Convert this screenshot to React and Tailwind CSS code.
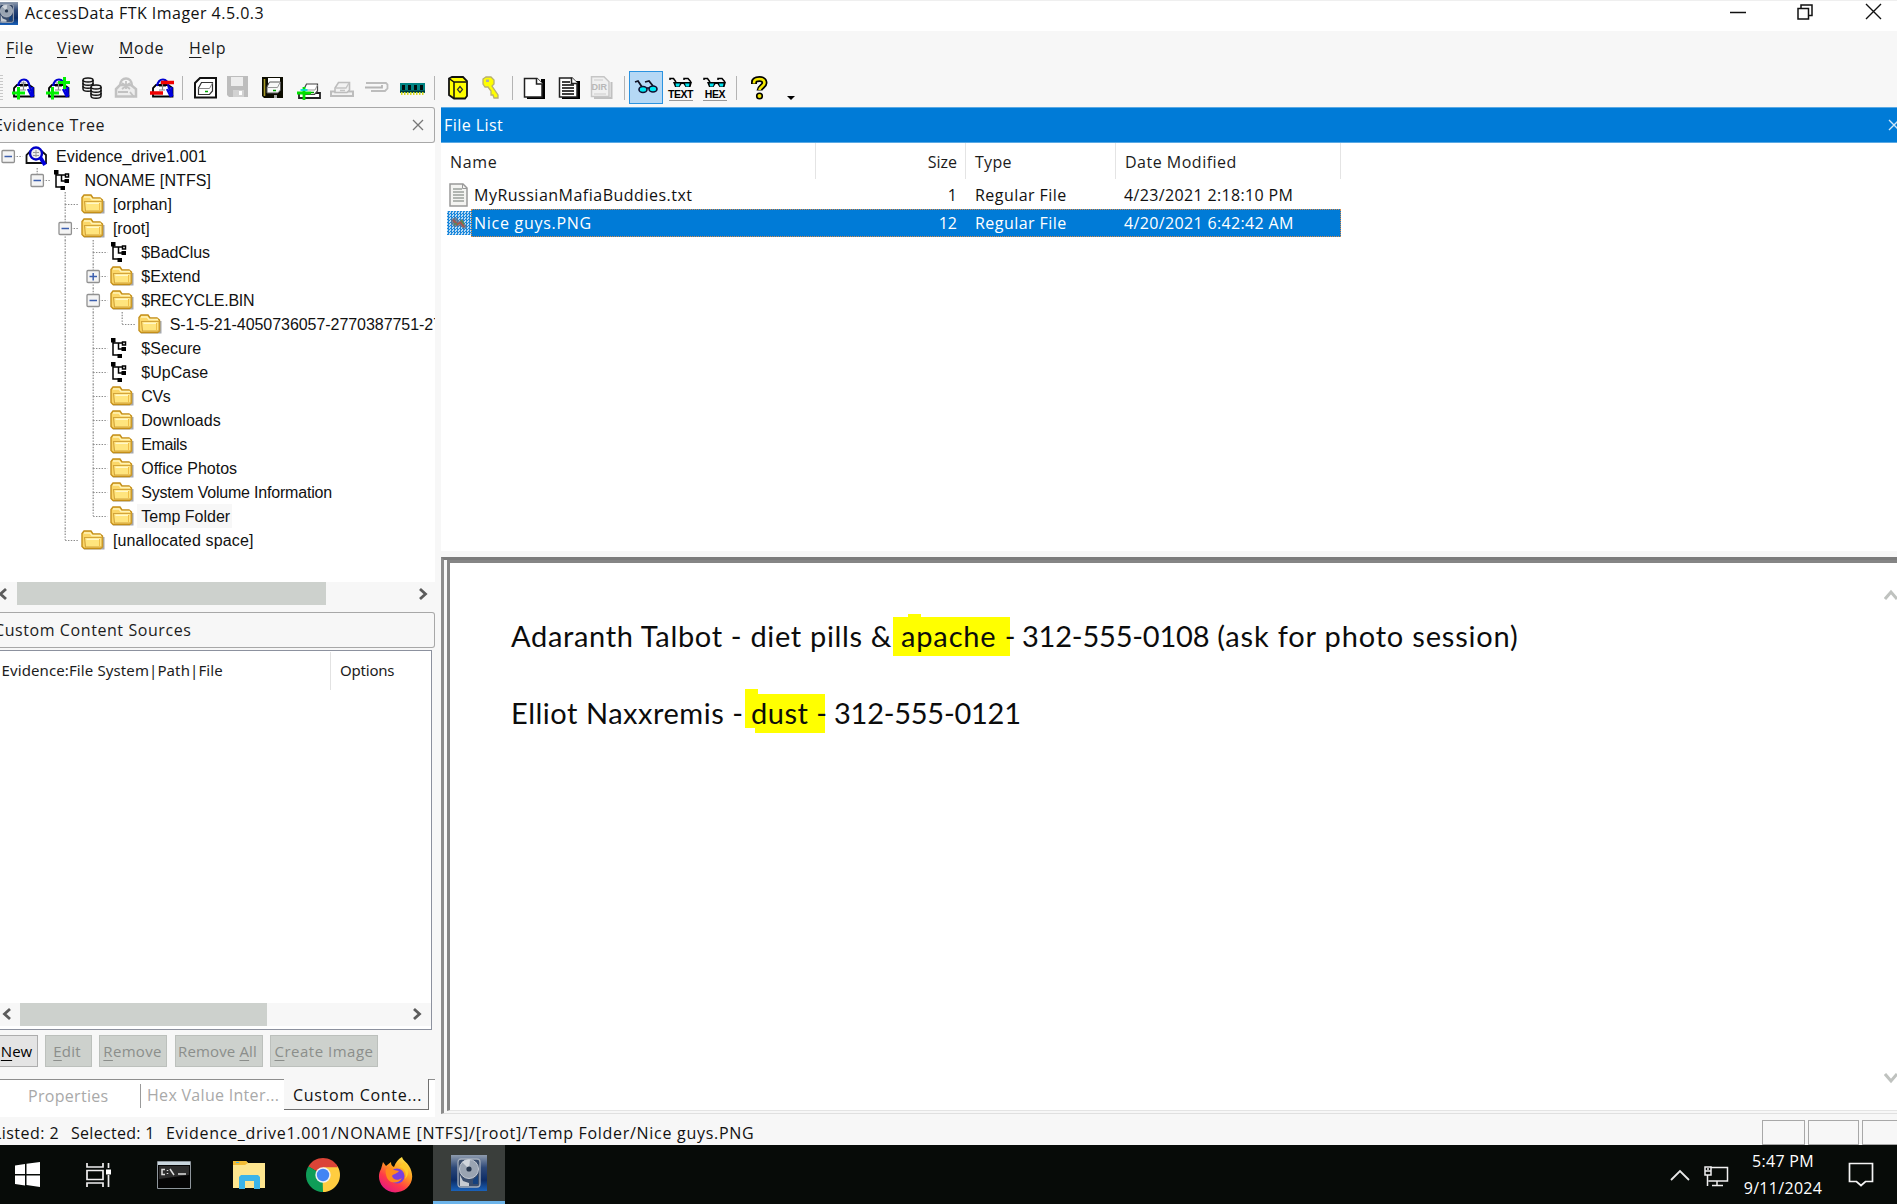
const UI = "font-['Open_Sans','Noto_Sans',sans-serif]";

function Svg({ w = 24, h = 24, children, className = "" }) {
  return (
    <svg width={w} height={h} viewBox={`0 0 ${w} ${h}`} fill="none" className={`block shrink-0 ${className}`}>
      {children}
    </svg>
  );
}

/* ---------- shared glyph pieces ---------- */

function DriveLens() {
  return (
    <>
      <path d="M3 20.500V12l3-3h12l4.500 3v8.500z" fill="#fff" stroke="#000" strokeWidth="1.800" />
      <path d="M7 10C8 5 10 3.500 13 3.500s5 2.500 5.500 7l4 10" stroke="#0000d0" strokeWidth="2.200" />
      <path d="M10 7h5M9 10.500h7M12.500 5.500v8M9 14h6" stroke="#8a8a8a" strokeWidth="1.200" />
      <path d="M17 13l4 8M21.500 11v9" stroke="#0000e0" strokeWidth="2.400" />
    </>
  );
}

function AddEvidence() {
  return (
    <Svg>
      <DriveLens />
      <path d="M1 17h13M7.500 11V23.500" stroke="#00f000" strokeWidth="3" />
    </Svg>
  );
}

function AddAll() {
  return (
    <Svg>
      <DriveLens />
      <path d="M0 17h13M6.500 11V23.500M12 6.500h12M18.500 1v12" stroke="#00f000" strokeWidth="3" />
    </Svg>
  );
}

function Stack({ x, y }) {
  return (
    <g stroke="#111" strokeWidth="1.500" fill="#eee">
      <path d={`M${x} ${y + 2}v9c0 3 10 3 10 0v-9`} />
      <path d={`M${x} ${y + 5}c0 3 10 3 10 0M${x} ${y + 8}c0 3 10 3 10 0`} />
      <ellipse cx={x + 5} cy={y + 2} rx="5" ry="2" />
    </g>
  );
}

function ImageMounting() {
  return (
    <Svg>
      <Stack x={3} y={2} />
      <Stack x={11} y={9} />
    </Svg>
  );
}

function RemoveGray() {
  return (
    <Svg className="-ml-[1px]">
      <path d="M2 20.500V13l4-4h11l5 4v7.500z" stroke="#c2c2c2" strokeWidth="2.500" fill="#ededed" />
      <path d="M6 10C6 5 9 2.500 12 2.500s6 2.500 6 7.500" stroke="#c2c2c2" strokeWidth="2.500" />
      <path d="M8 7l8 6M16 7l-8 6M12 5v8M4 16h10M16 16l4 5" stroke="#c2c2c2" strokeWidth="1.800" />
    </Svg>
  );
}

function RemoveRed() {
  return (
    <Svg className="ml-[2px]">
      <DriveLens />
      <path d="M11 6.500h13M0 17h13" stroke="#f00000" strokeWidth="3.400" />
    </Svg>
  );
}

function DiskImage() {
  return (
    <Svg>
      <path d="M2 21.500V7l5-5h16v19.500z" fill="#fff" stroke="#111" strokeWidth="2" />
      <path d="M5.500 18.500V12l3-5.500h11V15l-3 3.500z" fill="#fff" stroke="#333" strokeWidth="1.200" />
      <path d="M5.500 12.500h11l3-5.500" stroke="#888" strokeWidth="1" />
      <path d="M12 15.500h3" stroke="#00a000" strokeWidth="1.500" />
    </Svg>
  );
}

function FloppyGray() {
  return (
    <Svg className="-ml-[4px]">
      <path d="M2 0h21v21H4l-2-2z" fill="#bdbdbd" />
      <path d="M6 1h12v9H6z" fill="#ededed" />
      <path d="M8 14h11v7H8z" fill="#d2d2d2" />
      <path d="M14 15h3v4h-3z" fill="#fff" />
    </Svg>
  );
}

function FloppyDrive() {
  return (
    <Svg className="-ml-[3px]">
      <path d="M2 1h21v21H4l-2-2z" fill="#0c0c00" />
      <path d="M4.500 3v17" stroke="#a89c28" strokeWidth="1.600" />
      <path d="M8 2h12v5H8z" fill="#fff" />
      <path d="M7 17v-6l2.500-5h11v8l-2.500 3z" fill="#f8f8f8" stroke="#555" />
      <path d="M7.500 11.500h10l2.500-5" stroke="#999" />
      <path d="M13 14.500h3" stroke="#00a000" strokeWidth="1.500" />
      <path d="M14 19h3v3h-3z" fill="#aaa" />
    </Svg>
  );
}

function AddDrive() {
  return (
    <Svg className="ml-[1px]">
      <path d="M2 17h21v5H2z" fill="#fff" stroke="#222" strokeWidth="1.800" />
      <path d="M6.500 18.500V14L9.500 8h11v7l-3 3.500z" fill="#fff" stroke="#444" strokeWidth="1.200" />
      <path d="M9 14h9l2.500-5" stroke="#999" />
      <path d="M14 16.500h3" stroke="#00a000" strokeWidth="1.500" />
      <path d="M0 17h14M7 11v13" stroke="#00e000" strokeWidth="2.800" />
      <path d="M3.500 14h7" stroke="#00d8d8" strokeWidth="1.800" />
    </Svg>
  );
}

function DriveGray() {
  return (
    <Svg className="-ml-[1px]">
      <path d="M1 15.500h22V20H1z" fill="#f2f2f2" stroke="#bdbdbd" strokeWidth="2" />
      <path d="M5 16.500V12l3.500-5.500h11V14L17 16.500z" fill="#f2f2f2" stroke="#bdbdbd" strokeWidth="1.600" />
      <path d="M6 12h10l3-5M10 14.500h5" stroke="#c4c4c4" strokeWidth="1.400" />
    </Svg>
  );
}

function UsbGray() {
  return (
    <Svg>
      <path d="M1 7h20l1.500 1.500v4L20 15H6" stroke="#bdbdbd" strokeWidth="1.800" />
      <path d="M0 11.500h17V9" stroke="#b5b5b5" strokeWidth="1.800" />
    </Svg>
  );
}

function Memory() {
  return (
    <Svg w={25} className="ml-[2px]">
      <path d="M0 7h25v10H0z" fill="#008484" />
      <path d="M2 9h3v5H2zM8 9h3v5H8zM14 9h3v5h-3zM20 9h3v5h-3z" fill="#001010" />
      <path d="M0 15.500h25" stroke="#003838" strokeWidth="2" />
      <path d="M1 17.500h23" stroke="#d8d820" strokeWidth="3" strokeDasharray="1.500 1.500" />
    </Svg>
  );
}

function Safe() {
  return (
    <Svg className="ml-[3px]">
      <path d="M2 2.500L5 1h11l4 4v15l-2 2.500H7L2 19z" fill="#ff0" stroke="#111" strokeWidth="1.800" />
      <path d="M2 2.500L7 6h12M7 6v16" stroke="#111" strokeWidth="1.500" />
      <path d="M13 10.500l2.500 3-2.500 3-2.500-3z" stroke="#333" strokeWidth="1.200" />
    </Svg>
  );
}

function Key() {
  return (
    <Svg className="-ml-[1px]">
      <path d="M4 3l3-2h5l3 3v4l-2 2 6 9v3h-4l-1-3h-2v-4l-3-4H6L4 8z" fill="#ff0" stroke="#b8b070" strokeWidth="1.300" />
      <path d="M7 3.500h3V6H7z" fill="#aaa" />
    </Svg>
  );
}

function Page() {
  return (
    <Svg>
      <path d="M19 3h4v20H5v-2h14z" fill="#000" />
      <path d="M2.500 2.500H15l5 5v13.500H2.500z" fill="#fff" stroke="#222" strokeWidth="1.500" />
      <path d="M14.500 2v6H21" fill="#fff" stroke="#222" strokeWidth="1.500" />
    </Svg>
  );
}

function PageLines() {
  return (
    <Svg className="ml-[1px]">
      <path d="M19 5h4v18H5v-2h14z" fill="#000" />
      <path d="M2.500 2H15l5 5v14H2.500z" fill="#fff" stroke="#222" strokeWidth="1.500" />
      <path d="M5 6h8M5 9h12M5 12h12M5 15h12M5 18h12" stroke="#000" strokeWidth="1.700" />
      <path d="M14.500 1.500v6H21" fill="#fff" stroke="#222" strokeWidth="1.500" />
    </Svg>
  );
}

function DirGray() {
  return (
    <div className="-ml-[4px] grid h-6 w-6 grid-cols-1 grid-rows-1">
      <Svg className="col-start-1 row-start-1">
        <path d="M5 22h17.500V6" stroke="#c0c0c0" strokeWidth="2" />
        <path d="M2.500.800H15l5 5V20.500H2.500z" fill="#f0f0f0" stroke="#c6c6c6" strokeWidth="1.500" />
        <path d="M5 4h9M5 18h12" stroke="#ccc" />
      </Svg>
      <span className="col-start-1 row-start-1 pl-[3px] pt-[4px] font-['Liberation_Sans',sans-serif] text-[9px] font-bold leading-[14px] text-[#b8b8b8]">DIR</span>
    </div>
  );
}

function Specs() {
  return (
    <>
      <path d="M1 4V2.500h3.500L7 6M15 4V2.500h4L22 6" stroke="#000" strokeWidth="1.500" />
      <path d="M4 6h19l-1.500 5h-5l-2-3h-2l-2 3H6z" fill="#000" />
      <path d="M6.500 7.500h4.500l-1 3H7zM16 7.500h4.500l-.5 3h-3z" fill="#00e4f0" />
    </>
  );
}

function Glasses() {
  return (
    <Svg>
      <path d="M1 6l3-1 4 6M11 6l4-1 4 5" stroke="#112" strokeWidth="1.800" />
      <ellipse cx="9" cy="13.500" rx="4" ry="3" fill="#00e8f4" stroke="#113" strokeWidth="1.600" />
      <ellipse cx="19" cy="13" rx="4" ry="3" fill="#00e8f4" stroke="#113" strokeWidth="1.600" />
      <path d="M12.500 12h3" stroke="#113" strokeWidth="1.600" />
    </Svg>
  );
}

function SpecsLabel({ label }) {
  return (
    <div className="ml-[1px] flex h-[26px] w-6 flex-col items-center pt-px">
      <Svg h={13}><Specs /></Svg>
      <span className="h-[10px] font-['Liberation_Sans',sans-serif] text-[10.500px] font-bold leading-[10px] tracking-[-0.400px] text-black">{label}</span>
      <span className="mt-px h-[1.500px] w-full bg-[#999]" />
    </div>
  );
}

function Help() {
  return (
    <Svg>
      <path d="M7 8V6.500c0-3 3-3.500 5.500-3.500S17.500 4 17.500 7s-5 4-5 7.500" stroke="#000" strokeWidth="6" />
      <path d="M7 7.500V6.500c0-3 3-3.500 5.500-3.500S17.500 4 17.500 7s-5 4-5 7" stroke="#f4e800" strokeWidth="2.600" />
      <circle cx="12.500" cy="20" r="2.800" fill="#f4e800" stroke="#000" strokeWidth="1.600" />
    </Svg>
  );
}

function Folder() {
  return (
    <Svg w={24} h={22} className="-ml-[1px]">
      <path d="M3 19.500h19.500V8" stroke="#6b6f78" strokeWidth="2" opacity=".6" />
      <path d="M1 17.500V4.500L3 2h7l2 3h7l2.500 2V18l-2 1.500H3z" fill="#fbd768" stroke="#c48f1a" strokeWidth="1.400" />
      <path d="M3 4h6l2 2.500h9" stroke="#fff3b8" strokeWidth="1.300" />
      <path d="M3.500 8.500h17.500V18H4.500z" fill="#ffe57e" stroke="#d3a43a" strokeWidth="1.100" />
      <path d="M5.500 10.300H19" stroke="#fff8cf" strokeWidth="1.300" />
      <path d="M18.500 10v7" stroke="#f0bf48" />
    </Svg>
  );
}

function Nodes() {
  return (
    <Svg w={20} h={22} className="-ml-[5px]">
      <path d="M3 3v15h7M3 6h10M8.500 6v6H13" stroke="#000" strokeWidth="1.500" />
      <path d="M1 1h4.500v4.500H1zM11.500 10h4.500v4h-4.500zM7.500 17h4.500v4H7.500z" fill="#000" />
      <path d="M12.500 5h3v3h-3z" fill="#fff" stroke="#000" strokeWidth="1.500" />
    </Svg>
  );
}

function DriveFind() {
  return (
    <Svg w={24} h={22} className="-ml-[2px]">
      <path d="M2.500 18V10l4-4h11l4.500 4v8z" fill="#fff" stroke="#111" strokeWidth="1.800" />
      <circle cx="12" cy="8.500" r="6" fill="#eee" stroke="#0000c8" strokeWidth="2.400" />
      <path d="M9 7.500h6M9 10.500h6M12 5v7" stroke="#999" />
      <path d="M16 12l5 8" stroke="#0000dc" strokeWidth="3.800" />
    </Svg>
  );
}

function Chevron({ dir, color = "#5c5c5c", big }) {
  const d = { left: "M10 2L4.500 7 10 12", right: "M4 2l5.500 5L4 12", up: "M1 11l6-7 6 7", down: "M1 3l6 7 6-7" }[dir];
  return (
    <Svg w={14} h={14}>
      <path d={d} stroke={color} strokeWidth={big ? 3 : 2.800} />
    </Svg>
  );
}

function HardDisk({ size }) {
  return (
    <svg width={size} height={size} viewBox="0 0 36 36" fill="none" className="block shrink-0">
      <defs>
        <linearGradient id={`hd${size}`} x1="0" y1="0" x2="0" y2="1">
          <stop offset="0" stopColor="#8f9cae" />
          <stop offset=".35" stopColor="#2d4878" />
          <stop offset=".7" stopColor="#0c2c66" />
          <stop offset="1" stopColor="#1a62ba" />
        </linearGradient>
      </defs>
      <path d="M0 0h36v36H0z" fill={`url(#hd${size})`} />
      <rect x="7" y="4" width="22" height="28" rx="3" fill="#3a4d6c" stroke="#a4adba" strokeWidth="1.300" />
      <circle cx="18" cy="14" r="9.500" fill="#9aa4b2" stroke="#c4cad3" />
      <path d="M18 14L11 7a9.500 9.500 0 0 1 8-2z" fill="#d0d5dc" />
      <circle cx="18" cy="14" r="2.600" fill="#26364d" />
      <path d="M9 20l3 6 6 2v3H9z" fill="#c6cbd2" />
      <path d="M22 25l5-5v9h-5z" fill="#15417e" />
    </svg>
  );
}

/* ---------- toolbar ---------- */

function Slot({ children }) {
  return <div className="flex h-8 w-[34.500px] shrink-0 items-center justify-center">{children}</div>;
}

function Sep({ className }) {
  return (
    <div className={`flex h-6 shrink-0 justify-center ${className}`}>
      <div className="h-6 w-px bg-[#b4b4b4]" />
    </div>
  );
}

function Toolbar() {
  return (
    <div className="flex h-[37px] items-center pb-0.5">
      <div className="h-[26px] w-[3px] shrink-0 bg-[repeating-linear-gradient(#c8c8c8_0_1px,#f7f7f7_1px_3px)]" />
      <div className="w-[2.750px] shrink-0" />
      <Slot><AddEvidence /></Slot>
      <Slot><AddAll /></Slot>
      <Slot><ImageMounting /></Slot>
      <Slot><RemoveGray /></Slot>
      <Slot><RemoveRed /></Slot>
      <Sep className="w-[9px]" />
      <Slot><DiskImage /></Slot>
      <Slot><FloppyGray /></Slot>
      <Slot><FloppyDrive /></Slot>
      <Slot><AddDrive /></Slot>
      <Slot><DriveGray /></Slot>
      <Slot><UsbGray /></Slot>
      <Slot><Memory /></Slot>
      <Sep className="w-[11px]" />
      <Slot><Safe /></Slot>
      <Slot><Key /></Slot>
      <Sep className="w-[7.500px]" />
      <Slot><Page /></Slot>
      <Slot><PageLines /></Slot>
      <Slot><DirGray /></Slot>
      <Sep className="w-[8.500px]" />
      <Slot>
        <div className="flex h-[33px] w-[34px] shrink-0 items-center justify-center border border-[#2b93e0] bg-[#b5d8f5]">
          <Glasses />
        </div>
      </Slot>
      <Slot><SpecsLabel label="TEXT" /></Slot>
      <Slot><SpecsLabel label="HEX" /></Slot>
      <Sep className="w-[10px]" />
      <Slot><Help /></Slot>
      <div className="ml-[11px] mt-[20px] h-0 w-0 border-x-[4px] border-t-[4px] border-x-transparent border-t-black" />
    </div>
  );
}

/* ---------- evidence tree ---------- */

const tree = [
  ["E", DriveFind, "Evidence_drive1.001", "tracking-[0.060px]"],
  [" F", Nodes, "NONAME [NTFS]", "tracking-[0.100px]"],
  ["  t", Folder, "[orphan]", "tracking-[0.050px]"],
  ["  M", Folder, "[root]", "tracking-[0.050px]"],
  ["  |t", Nodes, "$BadClus", "tracking-[-0.100px]"],
  ["  |P", Folder, "$Extend", "tracking-[0.050px]"],
  ["  |M", Folder, "$RECYCLE.BIN", "tracking-[-0.200px]"],
  ["  ||l", Folder, "S-1-5-21-4050736057-2770387751-2784", "tracking-[-0.050px]"],
  ["  |t", Nodes, "$Secure", "tracking-[0.050px]"],
  ["  |t", Nodes, "$UpCase", "tracking-[0.020px]"],
  ["  |t", Folder, "CVs", "tracking-[-0.400px]"],
  ["  |t", Folder, "Downloads", "tracking-[0.040px]"],
  ["  |t", Folder, "Emails", "tracking-[-0.400px]"],
  ["  |t", Folder, "Office Photos", "tracking-[0px]"],
  ["  |t", Folder, "System Volume Information", "tracking-[-0.200px]"],
  ["  |l", Folder, "Temp Folder", "tracking-[0px] bg-[#f7f7f7]"],
  ["  l", Folder, "[unallocated space]", "tracking-[0.150px]"],
];

function Guide({ kind }) {
  const up = "|tlMPF".includes(kind);
  const down = "|tMP".includes(kind);
  const side = "tlMPEF".includes(kind);
  const box = "MPEF".includes(kind);
  return (
    <svg width="28.400" height="24" viewBox="0 0 28.400 24" className="block shrink-0" fill="none">
      <g stroke="#8a8a8a" strokeWidth="1.200" strokeDasharray="1.400 1.400">
        {up && <path d="M14.200 0v12" />}
        {down && <path d="M14.200 12v12" />}
        {side && <path d="M14.200 12.500h14.200" />}
      </g>
      {box && (
        <g>
          <rect x="8" y="6.500" width="12.400" height="12" rx="1" fill="#f4f4f4" stroke="#919191" strokeWidth="1.300" />
          <path d="M10.500 12.500h7.500" stroke="#3c5fae" strokeWidth="1.500" />
          {kind === "P" && <path d="M14.200 9v7.500" stroke="#3c5fae" strokeWidth="1.500" />}
        </g>
      )}
    </svg>
  );
}

function TreeRow({ row }) {
  const [guides, Icon, label, style] = row;
  return (
    <div className="flex h-6 items-center">
      {guides.split("").map((g, i) => <Guide key={i} kind={g} />)}
      <div className="flex w-[28.400px] shrink-0 justify-center"><Icon /></div>
      <span className={`ml-px h-6 shrink-0 whitespace-pre pl-1 pr-0.5 font-['Liberation_Sans',sans-serif] text-[16px] leading-[25px] text-[#111] ${style}`}>{label}</span>
    </div>
  );
}

function PanelHeader({ title, close, className = "" }) {
  return (
    <div className={`flex h-[36px] w-[435px] shrink-0 items-center justify-between rounded-r-[3px] border-y-[1.500px] border-r-[1.500px] border-[#a8a8a8] bg-[#f7f7f7] ${className}`}>
      <span className="-ml-[6px] whitespace-nowrap text-[16px] tracking-[0.580px] text-[#1c1c1c]">{title}</span>
      {close && (
        <Svg w={12} h={12} className="mr-[10px]">
          <path d="M1 1l10 10M11 1L1 11" stroke="#777" strokeWidth="1.300" />
        </Svg>
      )}
    </div>
  );
}

function Btn({ children, className }) {
  return (
    <div className={`flex h-[32px] shrink-0 items-center justify-center whitespace-nowrap border-[1.500px] text-[15px] ${className}`}>
      <span>{children}</span>
    </div>
  );
}

const off = "border-[#bcc0bc] bg-[#cdd1cd] text-[#8b8e8b]";

const U = ({ children }) => <span className="underline decoration-1 underline-offset-[3px]">{children}</span>;

function LeftPane() {
  return (
    <div className="flex w-[435px] shrink-0 flex-col overflow-hidden">
      <PanelHeader title="Evidence Tree" close />
      <div className="h-[439px] shrink-0 overflow-hidden bg-white pt-px">
        <div className="-ml-[5.700px]">
          {tree.map((r) => <TreeRow key={r[2]} row={r} />)}
        </div>
      </div>
      <div className="flex h-[23px] shrink-0 items-center">
        <div className="-ml-[4px] w-[20.500px]"><Chevron dir="left" /></div>
        <div className="h-[23px] w-[309px] bg-[#cdd1cd]" />
        <div className="ml-[90px]"><Chevron dir="right" /></div>
      </div>
      <PanelHeader title="Custom Content Sources" className="mt-[7px]" />
      <div className="mt-[2px] flex h-[380px] w-[432px] shrink-0 flex-col border-y-[1.500px] border-r-[1.500px] border-[#8c919e] bg-white">
        <div className="flex h-[39px] pt-px font-['Noto_Sans','Open_Sans',sans-serif] text-[15px] leading-[37px] text-[#1c1c1c]">
          <span className="w-[331px] border-r border-[#e2e2e2] pl-[1.500px] tracking-[0.110px]">Evidence:File System|Path|File</span>
          <span className="pl-[9px] tracking-[-0.200px]">Options</span>
        </div>
        <div className="grow" />
        <div className="mb-[3.500px] flex h-[23px] items-center bg-[#f7f7f7]">
          <div className="w-[20px]"><Chevron dir="left" /></div>
          <div className="h-[23px] w-[247px] bg-[#cdd1cd]" />
          <div className="ml-[143px]"><Chevron dir="right" /></div>
        </div>
      </div>
      <div className="mt-[5px] flex h-[32px] shrink-0">
        <Btn className="-ml-[4px] w-[42px] border-[#adadad] bg-[#e4e4e4] pr-[1px] text-black"><U>N</U>ew</Btn>
        <Btn className={`ml-[7px] w-[47px] pr-[3px] tracking-[0.200px] ${off}`}><U>E</U>dit</Btn>
        <Btn className={`ml-[7px] w-[68px] pr-[1px] tracking-[0.300px] ${off}`}><U>R</U>emove</Btn>
        <Btn className={`ml-[8px] w-[88px] pr-[3px] tracking-[0.150px] ${off}`}>Remove <U>A</U>ll</Btn>
        <Btn className={`ml-[7px] w-[108px] tracking-[0.500px] ${off}`}><U>C</U>reate Image</Btn>
      </div>
      <div className="mt-[12px] flex h-[38px] shrink-0 bg-white text-[16px] leading-[31px] text-[#a9a9a9]">
        <div className="flex w-[284px] border-t border-[#8e8e8e]">
          <span className="mt-[4px] h-[24px] w-[141px] border-r border-[#9a9a9a] pl-[28px] leading-[24px] tracking-[0.300px]">Properties</span>
          <span className="whitespace-nowrap pl-[6px] tracking-[0.300px]">Hex Value Inter...</span>
        </div>
        <div className="h-[31px] w-[145px] whitespace-nowrap border-b-[1.500px] border-r-[1.500px] border-[#707070] bg-[#f7f7f7] pl-[9px] leading-[33px] tracking-[0.700px] text-[#111]">Custom Conte...</div>
        <div className="grow border-t border-[#8e8e8e]" />
      </div>
    </div>
  );
}

/* ---------- file list ---------- */

function TxtIcon() {
  return (
    <Svg w={20} h={24}>
      <path d="M1 1h13l4 4v18H1z" fill="#f4f4f2" stroke="#999" strokeWidth="1.500" />
      <path d="M4 6h9M4 9h11M4 12h11M4 15h11M4 18h11" stroke="#9aa09c" strokeWidth="1.300" />
      <path d="M13.500 1v4.500H18" stroke="#999" />
    </Svg>
  );
}

function PngIcon() {
  return (
    <div className="flex h-6 w-6 items-center justify-center bg-[repeating-conic-gradient(#1c88dc_0_25%,#b9daf3_0_50%)] bg-[length:3px_3px]">
      <Svg w={18} h={14}>
        <path d="M1 3l5-2 3 4 3-2 5 8-3 2-4-3-6 1-3-4z" fill="#5f7088" opacity=".8" />
        <path d="M3 4l4 4M6 9l7-4M11 7l3 4" stroke="#a8574a" strokeWidth="2" />
        <path d="M4 8h3M11 4l3 4" stroke="#4d8f58" strokeWidth="1.500" />
      </Svg>
    </div>
  );
}

function FileRow({ icon, name, nameClass, size, date, selected }) {
  return (
    <div className="flex h-[28.500px] items-center pl-[6px]">
      <div className="flex w-[24px] shrink-0 justify-center">{icon}</div>
      <div className={`flex h-[28px] w-[870px] items-center text-[16px] ${selected ? "border border-dotted border-[#d88a48] bg-[#007bd7] text-white" : "border border-transparent text-[#111]"}`}>
        <span className={`w-[344px] pl-[2px] ${nameClass}`}>{name}</span>
        <span className="w-[150px] pr-[9px] text-right">{size}</span>
        <span className="w-[150px] pl-[9px] tracking-[0.450px]">Regular File</span>
        <span className="whitespace-nowrap pl-[8px] tracking-[0.350px]">{date}</span>
      </div>
    </div>
  );
}

function RightPane() {
  return (
    <div className="ml-[6px] flex min-w-0 grow flex-col">
      <div className="flex h-[36px] shrink-0 items-center justify-between overflow-hidden border-y border-[#5aa9e4] bg-[#007bd7] pl-[3px] text-[16px] tracking-[0.450px] text-white">
        <span>File List</span>
        <Svg w={12} h={12} className="-mr-[3px]">
          <path d="M1 1l10 10M11 1L1 11" stroke="#cfe6f8" strokeWidth="1.300" />
        </Svg>
      </div>
      <div className="h-[408px] shrink-0 bg-white">
        <div className="flex h-[37.500px] pb-[1.500px] text-[16px] leading-[38px] text-[#1c1c1c]">
          <span className="w-[375px] border-r border-[#e4e4e4] pl-[9px] tracking-[0.700px]">Name</span>
          <span className="w-[150px] border-r border-[#e4e4e4] pr-[8px] text-right">Size</span>
          <span className="w-[150px] border-r border-[#e4e4e4] pl-[9px] tracking-[0.300px]">Type</span>
          <span className="w-[225px] border-r border-[#e4e4e4] pl-[9px] tracking-[0.500px]">Date Modified</span>
        </div>
        <FileRow icon={<TxtIcon />} name="MyRussianMafiaBuddies.txt" nameClass="tracking-[0.500px]" size="1" date="4/23/2021 2:18:10 PM" />
        <FileRow icon={<PngIcon />} name="Nice guys.PNG" nameClass="tracking-[0.720px]" size="12" date="4/20/2021 6:42:42 AM" selected />
      </div>
      <div className="mt-[6px] flex h-[557px] shrink-0 border-b border-l-[3px] border-t-[3px] border-b-[#e0e0e0] border-l-[#8c8c8c] border-t-[#7c7c7c] bg-[#f7f7f7] pb-[2px] pl-[3px]">
        <div className="flex grow justify-between border-b border-l-[3px] border-t-[3px] border-b-[#e4e4e4] border-l-[#858585] border-t-[#858585] bg-white">
          <Document />
          <div className="-mr-[1px] flex w-[14px] flex-col justify-between pb-[25px] pt-[25px]">
            <Chevron dir="up" color="#bfc2bf" big />
            <Chevron dir="down" color="#bfc2bf" big />
          </div>
        </div>
      </div>
    </div>
  );
}

function Document() {
  return (
    <div className="pl-[61px] pt-[54px] font-['Lato',sans-serif] text-[29px] leading-[37px] text-[#0c0c0c]">
      <div className="flex h-[40px] whitespace-pre">
        <span className="w-[382px] tracking-[0.670px]">Adaranth Talbot - diet pills &amp;</span>
        <div className="relative h-[39px] w-[117px] bg-[#ff0] pl-[8px] tracking-[0.850px]">
          <span className="absolute -top-[3px] left-[15px] h-[3px] w-[13px] bg-[#ff0]" />
          <span className="relative z-10">apache -</span>
        </div>
        <span className="pl-[12px] tracking-[-0.200px]">312-555-0108</span>
        <span className="pl-[8px] tracking-[0.820px]">(ask for photo session)</span>
      </div>
      <div className="mt-[37px] flex h-[40px] whitespace-pre">
        <span className="w-[234px] tracking-[0.520px]">Elliot Naxxremis -</span>
        <div className="relative h-[39px] w-[80px] bg-[#ff0] pl-[6px] tracking-[0.500px]">
          <span className="absolute -top-[5px] left-0 h-[5px] w-[13px] bg-[#ff0]" />
          <span className="absolute bottom-0 left-0 h-[5px] w-[10px] bg-white" />
          <span className="relative z-10">dust -</span>
        </div>
        <span className="pl-[9px] tracking-[-0.250px]">312-555-0121</span>
      </div>
    </div>
  );
}

/* ---------- taskbar ---------- */

function Task({ children, active }) {
  return (
    <div className={`flex h-full shrink-0 items-center justify-center ${active ? "ml-[1px] w-[72px] border-b-[3px] border-[#6cb4ea] bg-[#3a3e3b]" : "w-[73.500px]"}`}>
      {children}
    </div>
  );
}

function Taskbar() {
  return (
    <div className="flex h-[59px] shrink-0 items-center bg-[#070b08] text-white">
      <div className="flex w-[54px] shrink-0 justify-center">
        <Svg w={25} h={25}>
          <path d="M0 3.500L10 2v10H0zM11.500 1.800L25 0v12H11.500zM0 13.500h10v10L0 22zM11.500 13.500H25V25l-13.500-2z" fill="#fff" />
        </Svg>
      </div>
      <div className="flex w-[84.200px] shrink-0 pl-[32px]">
        <Svg w={26} h={24}>
          <path d="M1 0v4h16V0M1 24v-4h16v4M1 7.500h16v9H1zM22.500 0v5M22.500 12v12" stroke="#f0f0f0" strokeWidth="1.700" />
          <path d="M20 6.500h5v5h-5z" fill="#fff" />
        </Svg>
      </div>
      <Task>
        <Svg w={34} h={28} className="-ml-[1px]">
          <path d="M.5.500h33v27H.500z" fill="#050505" stroke="#8e969c" />
          <path d="M1 1h32v3H1z" fill="#c9d6de" />
          <path d="M2 5h30v9L2 18z" fill="#2c2c2c" />
          <path d="M8 8.500H5v5h3M10.500 9v1M10.500 12v1M13 8l4 6M21 13h8" stroke="#ddd" strokeWidth="1.500" />
        </Svg>
      </Task>
      <Task>
        <Svg w={34} h={28} className="ml-[1px]">
          <path d="M1 0h13l2 2h17v25H1z" fill="#fde68f" />
          <path d="M1 0h13l2 2-3 2H1z" fill="#f3bd35" />
          <path d="M4 1.500h3" stroke="#4bb8e8" />
          <path d="M7 28V16l2-2h17l2 2v12h-6v-8h-9v8z" fill="#3bb4e8" />
        </Svg>
      </Task>
      <Task>
        <Svg w={34} h={34} className="ml-[2px]">
          <path d="M17 17L2.280 8.500A17 17 0 0 1 31.720 8.500z" fill="#db4437" />
          <path d="M17 17L2.280 8.500A17 17 0 0 0 17 34l7.400-12.700z" fill="#0f9d58" />
          <path d="M17 17h-.5L17 34A17 17 0 0 0 31.720 8.500H17z" fill="#ffcd40" />
          <path d="M17 17l-6.700 4L2.280 8.500z" fill="#0f9d58" />
          <path d="M17 9.300h14.720L30 6H12z" fill="#db4437" />
          <circle cx="17" cy="17" r="7.700" fill="#f1f1f1" />
          <circle cx="17" cy="17" r="6.200" fill="#4285f4" />
        </Svg>
      </Task>
      <Task>
        <svg width="36" height="36" viewBox="0 0 36 36" className="ml-[2px] block">
          <defs>
            <linearGradient id="ff" x1=".85" y1="0" x2=".25" y2="1">
              <stop offset="0" stopColor="#fff44f" />
              <stop offset=".4" stopColor="#ff9a1f" />
              <stop offset=".7" stopColor="#ff3a48" />
              <stop offset="1" stopColor="#e31587" />
            </linearGradient>
          </defs>
          <path d="M24 0c1 4 5 5 7 9 5 8 4 17-2 22-7 6-18 6-24-1C0 24 0 17 3 12l2-7 3 4 5-4c0 3 1 4 3 5 2-5 4-8 8-10z" fill="url(#ff)" />
          <circle cx="19" cy="19" r="7.500" fill="#7a3fe0" />
          <path d="M8 12c3-2 6-1 8 1l5 1c-2 3-6 3-7 5 1 4 6 5 10 2-3 6-12 6-15 0-1-3-2-6-1-9z" fill="#ff8a1c" />
          <path d="M21 10c6 1 8 6 6 12 5-5 4-12-1-17z" fill="#ffc928" />
        </svg>
      </Task>
      <Task active><HardDisk size={36} /></Task>
      <div className="grow" />
      <Svg w={20} h={12}><path d="M1 11l9-9 9 9" stroke="#e8e8e8" strokeWidth="1.800" /></Svg>
      <Svg w={26} h={22} className="ml-[13px] mt-[2px]">
        <path d="M7 2.500h17.500V16H5.500M4.500 10v11M14 16v4M9 20.500h11" stroke="#f0f0f0" strokeWidth="1.500" />
        <path d="M2 2h6v8H2zM2 6h6M4 4h2" fill="#070b08" stroke="#f0f0f0" strokeWidth="1.500" />
      </Svg>
      <div className="ml-[14px] flex w-[80px] flex-col items-center whitespace-nowrap text-[16px] leading-[27px]">
        <span className="tracking-[0.300px]">5:47 PM</span>
        <span className="tracking-[0.300px]">9/11/2024</span>
      </div>
      <Svg w={26} h={25} className="ml-[25px] mr-[23px]">
        <path d="M1.500 1.500h23v18h-7L13 23.500 8.500 19.500h-7z" stroke="#f4f4f4" strokeWidth="1.700" />
      </Svg>
    </div>
  );
}

/* ---------- window ---------- */

export default function App() {
  return (
    <div className={`flex h-[1204px] w-[1897px] flex-col overflow-hidden bg-[#f7f7f7] text-[#111] ${UI}`}>
      <div className="flex h-[31px] shrink-0 items-center justify-between border-t border-[#efefef] bg-white">
        <div className="flex items-center pb-[6px]">
          <div className="-ml-[5px]"><HardDisk size={23} /></div>
          <span className="ml-[7px] pb-px text-[16px] leading-[24px] tracking-[0.460px] text-[#111]">AccessData FTK Imager 4.5.0.3</span>
        </div>
        <div className="flex items-center pb-[9px] pr-[15px]">
          <Svg w={16} h={16}><path d="M0 8.500h16" stroke="#111" strokeWidth="1.500" /></Svg>
          <Svg w={16} h={16} className="ml-[51px]">
            <path d="M1 4.500h10.500V15H1zM4 4V1h11v10.500h-3" stroke="#111" strokeWidth="1.500" />
          </Svg>
          <Svg w={17} h={17} className="ml-[52px]"><path d="M1 1l15 15M16 1L1 16" stroke="#111" strokeWidth="1.400" /></Svg>
        </div>
      </div>
      <div className="flex h-[39px] shrink-0 items-center pb-[6px] pl-[6px] text-[16px] tracking-[0.600px] text-[#1a1a1a]">
        <span className="w-[51px]"><U>F</U>ile</span>
        <span className="w-[62px]"><U>V</U>iew</span>
        <span className="w-[70px]"><U>M</U>ode</span>
        <span><U>H</U>elp</span>
      </div>
      <Toolbar />
      <div className="flex h-[1011px] shrink-0">
        <LeftPane />
        <RightPane />
      </div>
      <div className="flex h-[27px] shrink-0 justify-between overflow-hidden pt-[2px]">
        <div className="-ml-[7px] flex whitespace-pre text-[16px] leading-[26px] text-[#111]">
          <span className="w-[78px] tracking-[0.450px]">Listed: 2</span>
          <span className="w-[95px] tracking-[0.300px]">Selected: 1</span>
          <span className="tracking-[0.710px]">Evidence_drive1.001/NONAME [NTFS]/[root]/Temp Folder/Nice guys.PNG</span>
        </div>
        <div className="flex gap-[3px]">
          <div className="h-[25px] w-[43px] border-[1.500px] border-[#a8a8a8]" />
          <div className="h-[25px] w-[51px] border-[1.500px] border-[#a8a8a8]" />
          <div className="h-[25px] w-[35px] border-y-[1.500px] border-l-[1.500px] border-[#a8a8a8]" />
        </div>
      </div>
      <Taskbar />
    </div>
  );
}
